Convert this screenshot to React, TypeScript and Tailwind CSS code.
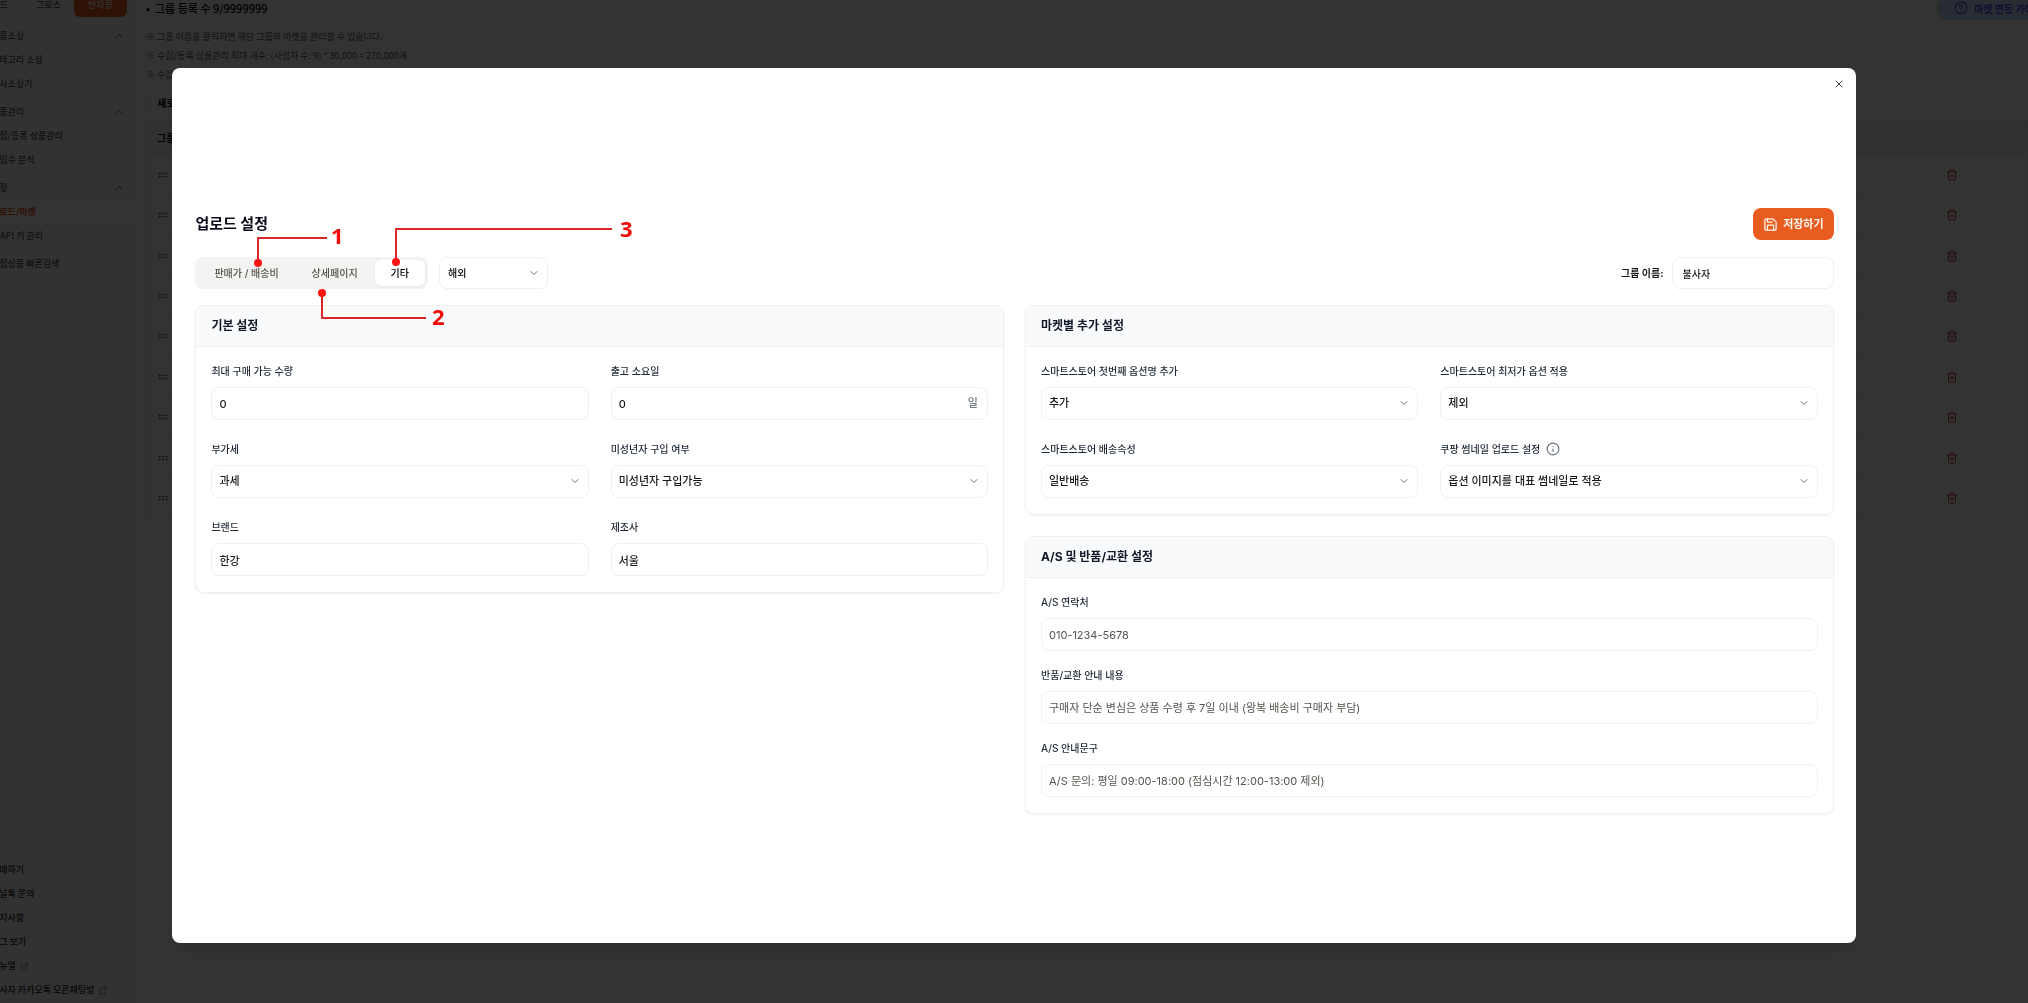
import type { ReactNode } from 'react';
import {
  ChevronDown,
  ChevronUp,
  CircleHelp,
  ExternalLink,
  GripHorizontal,
  Info,
  Save,
  Trash2,
  X,
} from 'lucide-react';

const navGroups = [
  { title: '상품소싱', items: ['카테고리 소싱', '복사소싱기'] },
  { title: '상품관리', items: ['수집/등록 상품관리', '유입수 분석'] },
  { title: '설정', items: ['업로드/마켓', 'API 키 관리'] },
];

const footerLinks = [
  { label: '구매하기' },
  { label: '채널톡 문의' },
  { label: '공지사항' },
  { label: '로그 보기' },
  { label: '매뉴얼', external: true },
  { label: '불사자 카카오톡 오픈채팅방', external: true },
];

const control =
  'h-[33px] w-full rounded-lg border border-[#f0f0f1] bg-white px-[7px] text-[11px] font-medium text-[#1c1917] outline-none placeholder:font-normal placeholder:text-[#57534e]';

function Sidebar() {
  return (
    <aside className="w-[135px] shrink-0 overflow-hidden bg-[#fafafa] text-[9px] font-medium text-[#52525b]">
      <div className="-ml-[9px] flex h-full flex-col">
        <div className="-mt-[7px] flex h-6 items-center">
          <button className="w-[17px] text-right">드</button>
          <button className="ml-[15px] w-[51px] text-center">그로스</button>
          <button className="h-6 w-[53px] rounded-md bg-[#e85d1f] font-bold text-[#fcd9c6]">반자동</button>
        </div>
        <nav className="mt-[7px]">
          {navGroups.map((group) => (
            <div key={group.title} className="mb-1">
              <button className="flex h-6 w-full items-center justify-between pr-[10px]">
                {group.title}
                <ChevronUp size={12} />
              </button>
              {group.items.map((item) => (
                <a
                  key={item}
                  href="#"
                  className={
                    item === '업로드/마켓'
                      ? 'flex h-6 items-center rounded-md bg-white font-bold text-[#e85d1f]'
                      : item.startsWith('API')
                        ? 'flex h-6 items-center pl-[9px]'
                        : 'flex h-6 items-center'
                  }
                >
                  {item}
                </a>
              ))}
            </div>
          ))}
          <a href="#" className="flex h-6 items-center">수집상품 빠른검색</a>
        </nav>
        <div className="mt-auto pb-px text-[#27272a]">
          {footerLinks.map((link) => (
            <a key={link.label} href="#" className="flex h-6 items-center gap-1 whitespace-nowrap">
              {link.label}
              {link.external && <ExternalLink size={9} className="text-[#71717a]" />}
            </a>
          ))}
        </div>
      </div>
    </aside>
  );
}

function GroupPage() {
  return (
    <main className="ml-[10px] min-w-0 flex-1 overflow-hidden border-l border-[#f4f4f5] bg-white text-[#52525b]">
      <div className="-mt-1 flex h-6 items-center justify-between">
        <p className="text-[11px] font-medium text-black">
          <span className="inline-block w-[9px]">•</span>그룹 등록 수 9/9999999
        </p>
        <button className="-mr-8 flex h-6 shrink-0 items-center gap-[6px] rounded-full border border-[#bfdbfe] bg-[#c7dffe] px-4 text-[10px] font-bold text-[#4f46e5]">
          <CircleHelp size={14} />
          마켓 연동 가이드
        </button>
      </div>
      <div className="mt-[7px] text-[9px] leading-[19px]">
        <p>※ 그룹 이름을 클릭하면 해당 그룹의 마켓을 관리할 수 있습니다.</p>
        <p>※ 수집/등록 상품관리 최대 개수: (사업자 수: 9) * 30,000 = 270,000개</p>
        <p>※ 수집/등록 상품은 최대 개수까지 저장됩니다.</p>
      </div>
      <button className="mt-[6px] block h-6 rounded-lg border border-[#f0f0f1] px-[10px] text-[10px] font-bold text-black">
        새로운 그룹
      </button>
      <table className="mt-[6px] h-[399px] w-full border border-[#f0f0f1] text-[10px]">
        <thead>
          <tr className="h-[34px] bg-[#f5f5f5] text-left text-black">
            <th className="pl-[10px] font-bold">그룹 이름</th>
            <th className="w-[87px]" />
          </tr>
        </thead>
        <tbody>
          {Array.from({ length: 9 }, (_, i) => (
            <tr key={i} className="border-t border-[#f0f0f1]">
              <td className="pl-[10px]">
                <GripHorizontal size={12} />
              </td>
              <td>
                <button
                  aria-label="삭제"
                  className="flex h-[22px] w-[22px] items-center justify-center rounded-md border border-[#f0f0f1] text-[#c0392b]"
                >
                  <Trash2 size={12} />
                </button>
              </td>
            </tr>
          ))}
        </tbody>
      </table>
    </main>
  );
}

function Card({ title, children }: { title: string; children: ReactNode }) {
  return (
    <section className="overflow-hidden rounded-lg border border-[#eef0f2] shadow-xs">
      <h2 className="flex h-[41px] items-center border-b border-[#eef0f2] bg-[#f9fafb] px-[15px] text-[12px] font-bold text-[#111827]">
        {title}
      </h2>
      <div className="px-[15px] py-4">{children}</div>
    </section>
  );
}

function Label({ id, children }: { id: string; children: ReactNode }) {
  return (
    <label htmlFor={id} className="mb-2 flex h-4 items-center gap-[6px] text-[10px] font-medium text-[#1f2937]">
      {children}
    </label>
  );
}

type FieldProps = { id: string; label: string; value?: string; placeholder?: string; unit?: string };

function TextField({ id, label, value, placeholder, unit }: FieldProps) {
  return (
    <div>
      <Label id={id}>{label}</Label>
      <div className="relative">
        <input id={id} defaultValue={value} placeholder={placeholder} className={control} />
        {unit && (
          <span className="absolute inset-y-0 right-[10px] flex items-center text-[11px] text-[#4b5563]">{unit}</span>
        )}
      </div>
    </div>
  );
}

function SelectField({ id, label, value, info }: FieldProps & { info?: boolean }) {
  return (
    <div>
      <Label id={id}>
        {label}
        {info && <Info size={14} strokeWidth={2} className="text-[#6b7280]" />}
      </Label>
      <div className="relative">
        <select id={id} className={`${control} appearance-none`}>
          <option>{value}</option>
        </select>
        <ChevronDown size={12} className="pointer-events-none absolute top-[10px] right-2 text-[#78716c]" />
      </div>
    </div>
  );
}

// red numbered markers that point at the three tabs
function TabMarkers() {
  return (
    <svg
      className="pointer-events-none absolute top-0 left-0"
      width="460"
      height="130"
      fill="none"
      aria-hidden="true"
    >
      <g stroke="#d92626" strokeWidth="2">
        <path d="M63 55V30H132" />
        <path d="M127 85V110H231" />
        <path d="M201 54V21H417" />
      </g>
      <g fill="#ff1414">
        <circle cx="63" cy="55" r="4" />
        <circle cx="127" cy="85" r="4" />
        <circle cx="201" cy="54" r="4" />
      </g>
      <g fill="#f00a0a" fontFamily="Open Sans, sans-serif" fontSize="22" fontWeight="700">
        <text x="136" y="36">1</text>
        <text x="237" y="117">2</text>
        <text x="425" y="29">3</text>
      </g>
    </svg>
  );
}

function UploadSettings() {
  return (
    <div className="relative">
      <div className="flex h-8 items-center justify-between">
        <h1 className="text-[15px] font-bold text-[#0c0a1a]">업로드 설정</h1>
        <button className="flex h-8 items-center gap-[5px] rounded-lg bg-[#e85d1f] px-[10px] text-[11px] font-bold text-[#fff7f0]">
          <Save size={15} />
          저장하기
        </button>
      </div>

      <div className="mt-[17px] flex h-8 items-center justify-between text-[10px] font-medium">
        <div className="flex items-center gap-[11px]">
          <div role="tablist" className="flex h-8 gap-px rounded-lg bg-[#f3f3f2] p-[3px] text-[#57534e]">
            <button role="tab" className="px-4">판매가 / 배송비</button>
            <button role="tab" className="px-4">상세페이지</button>
            <button role="tab" aria-selected="true" className="rounded-md bg-white px-4 text-black shadow-xs">
              기타
            </button>
          </div>
          <div className="relative w-[109px]">
            <select
              aria-label="지역"
              className="h-8 w-full appearance-none rounded-lg border border-[#f0f0f1] bg-white px-2 text-black outline-none"
            >
              <option>해외</option>
            </select>
            <ChevronDown size={12} className="pointer-events-none absolute top-[10px] right-2 text-[#78716c]" />
          </div>
        </div>
        <div className="flex items-center gap-2">
          <label htmlFor="group-name" className="font-bold text-[#1c1917]">그룹 이름:</label>
          <input
            id="group-name"
            defaultValue="불사자"
            className="h-8 w-[162px] rounded-lg border border-[#f0f0f1] px-[10px] text-[#1c1917] outline-none"
          />
        </div>
      </div>

      <div className="mt-4 grid grid-cols-2 items-start gap-[21px]">
        <Card title="기본 설정">
          <div className="grid grid-cols-2 gap-x-[22px] gap-y-[21px]">
            <TextField id="max-qty" label="최대 구매 가능 수량" value="0" />
            <TextField id="ship-days" label="출고 소요일" value="0" unit="일" />
            <SelectField id="vat" label="부가세" value="과세" />
            <SelectField id="minor" label="미성년자 구입 여부" value="미성년자 구입가능" />
            <TextField id="brand" label="브랜드" value="한강" />
            <TextField id="maker" label="제조사" value="서울" />
          </div>
        </Card>
        <div className="flex flex-col gap-[21px]">
          <Card title="마켓별 추가 설정">
            <div className="grid grid-cols-2 gap-x-[22px] gap-y-[21px]">
              <SelectField id="first-option" label="스마트스토어 첫번째 옵션명 추가" value="추가" />
              <SelectField id="lowest-option" label="스마트스토어 최저가 옵션 적용" value="제외" />
              <SelectField id="delivery" label="스마트스토어 배송속성" value="일반배송" />
              <SelectField id="thumbnail" label="쿠팡 썸네일 업로드 설정" value="옵션 이미지를 대표 썸네일로 적용" info />
            </div>
          </Card>
          <Card title="A/S 및 반품/교환 설정">
            <div className="flex flex-col gap-4">
              <TextField id="as-phone" label="A/S 연락처" placeholder="010-1234-5678" />
              <TextField
                id="return-guide"
                label="반품/교환 안내 내용"
                placeholder="구매자 단순 변심은 상품 수령 후 7일 이내 (왕복 배송비 구매자 부담)"
              />
              <TextField
                id="as-guide"
                label="A/S 안내문구"
                placeholder="A/S 문의: 평일 09:00-18:00 (점심시간 12:00-13:00 제외)"
              />
            </div>
          </Card>
        </div>
      </div>

      <TabMarkers />
    </div>
  );
}

export default function App() {
  return (
    <div className="relative h-screen overflow-hidden bg-white">
      <div className="flex h-full font-['Noto_Sans_CJK_KR',sans-serif]">
        <Sidebar />
        <GroupPage />
      </div>

      {/* Dialog */}
      <div className="fixed inset-0 flex justify-center bg-black/80 pt-[68px] pb-[60px] font-[Inter,'Noto_Sans_CJK_KR',sans-serif]">
        <div role="dialog" aria-label="업로드 설정" className="relative w-[83%] rounded-lg bg-white pt-[140px] pr-[22px] pl-[23px] shadow-lg">
          <button aria-label="닫기" className="absolute top-[10px] right-[11px] text-[#44403c]">
            <X size={12} />
          </button>
          <UploadSettings />
        </div>
      </div>
    </div>
  );
}
